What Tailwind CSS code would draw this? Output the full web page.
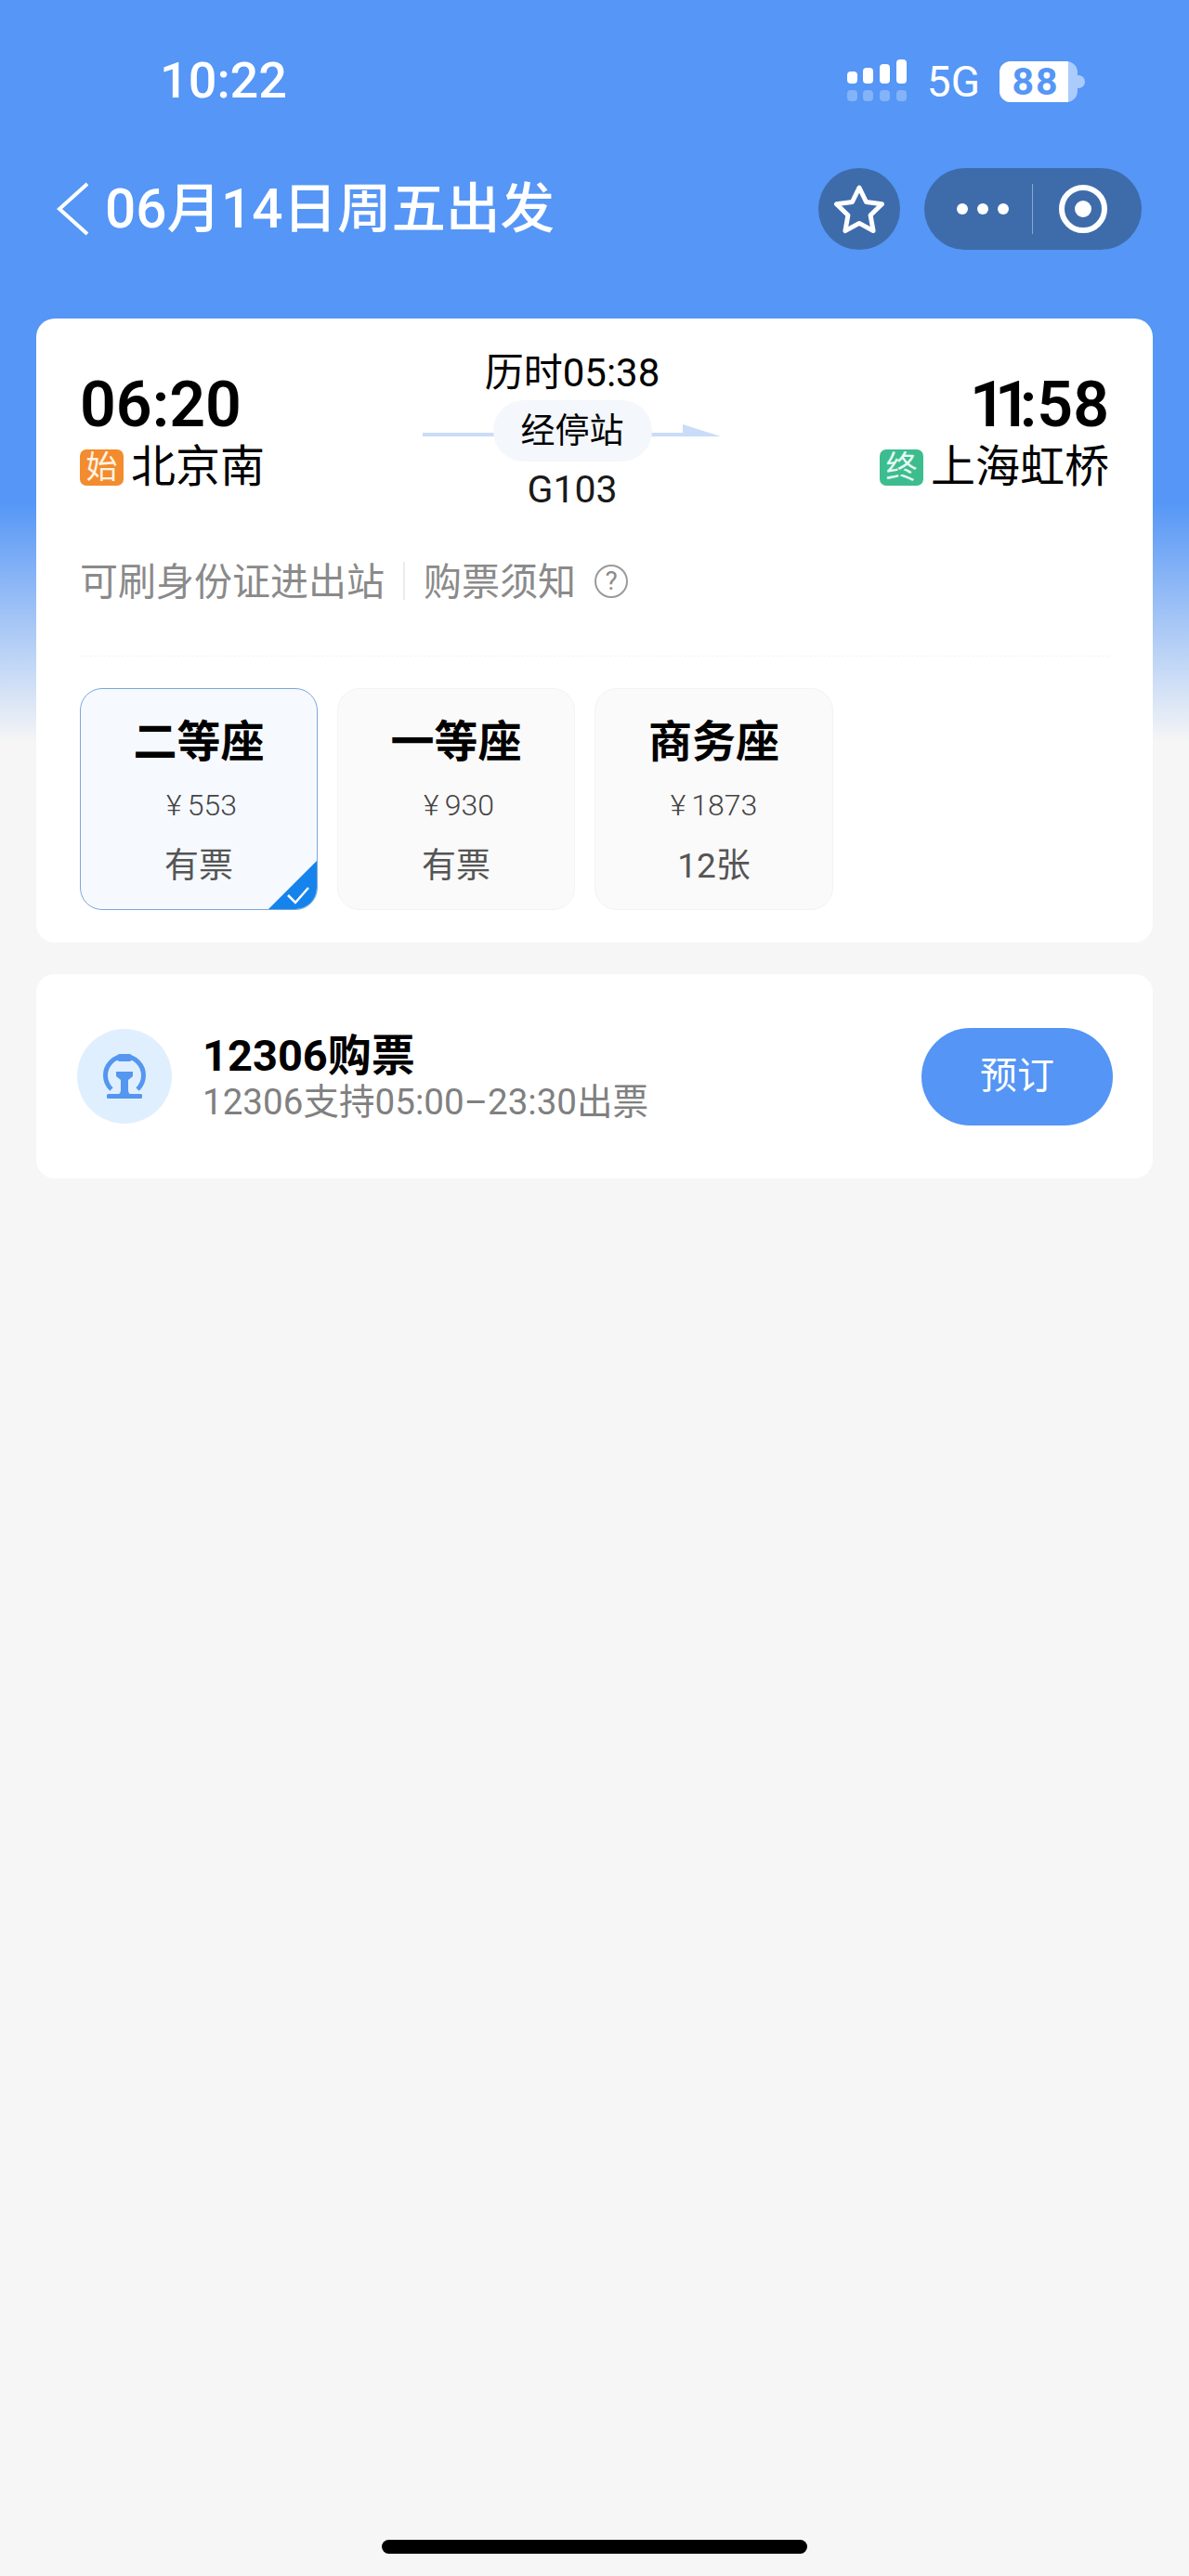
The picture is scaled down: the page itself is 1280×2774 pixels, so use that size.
<!DOCTYPE html>
<html lang="zh">
<head>
<meta charset="utf-8">
<script src="https://cdn.jsdelivr.net/npm/@tailwindcss/browser@4"></script>
</head>
<body class="m-0">
<div class="relative w-[1280px] h-[2774px] overflow-hidden flex flex-col bg-[linear-gradient(to_bottom,#5596f6_0px,#5596f6_540px,#f6f6f6_800px,#f6f6f6_100%)] font-['Roboto','Noto_Sans_CJK_SC',sans-serif] text-black">

  <!-- status bar -->
  <div class="h-[181px] shrink-0 flex flex-col">
    <div class="h-[60px] mt-[57px] pl-[172px] pr-[112px] flex justify-between items-center text-white">
      <span class="text-[54px] leading-none font-medium">10:22</span>
      <div class="flex items-center gap-[21px] pt-[2px]">
        <svg width="66" height="46" viewBox="0 0 66 46" fill="#fff" class="-mt-[2px]">
          <rect x="1" y="13" width="11" height="13" rx="4"/><rect x="18" y="9" width="11" height="17" rx="4"/><rect x="36" y="5" width="11" height="21" rx="4"/><rect x="54" y="0" width="11" height="26" rx="4"/>
          <g opacity=".28"><rect x="1" y="33" width="11" height="12" rx="4"/><rect x="18" y="33" width="11" height="12" rx="4"/><rect x="36" y="33" width="11" height="12" rx="4"/><rect x="54" y="33" width="11" height="12" rx="4"/></g>
        </svg>
        <span class="text-[46px] leading-none">5G</span>
        <div class="flex items-center">
          <div class="w-[84px] h-[44px] rounded-[12px] bg-white/50">
            <div class="w-[74px] h-full rounded-l-[12px] bg-white flex items-center justify-center text-[41px] font-bold leading-none tracking-[2px] text-[#5596f6] pl-[4px]">88</div>
          </div>
          <div class="w-[8px] h-[14px] rounded-r-full bg-white/50"></div>
        </div>
      </div>
    </div>
  </div>

  <!-- nav bar -->
  <div class="h-[88px] shrink-0 pl-[60px] pr-[51px] flex items-center justify-between text-white">
    <div class="flex items-center gap-[17px]">
      <svg width="36" height="58" viewBox="0 0 36 58" fill="none" stroke="#fff" stroke-width="4"><path d="M34 2 4 29l30 27"/></svg>
      <span class="text-[58.500px] leading-none font-medium">06月14日周五出发</span>
    </div>
    <div class="flex items-center gap-[26px]">
      <div class="w-[88px] h-[88px] rounded-full bg-[#3e6cab] flex items-center justify-center">
        <svg width="56" height="54" viewBox="0 0 56 54" fill="none" stroke="#fff" stroke-width="5" stroke-linejoin="round"><path d="M28 4l7.500 15.500 17 2.300-12.400 11.900 3 16.900L28 42.400l-15.100 8.200 3-16.900L3.500 21.800l17-2.300z"/></svg>
      </div>
      <div class="w-[234px] h-[88px] rounded-full bg-[#3e6cab] flex items-center">
        <div class="w-[116px] flex justify-center gap-[10px] pl-[10px]">
          <span class="w-[12px] h-[12px] rounded-full bg-white"></span><span class="w-[12px] h-[12px] rounded-full bg-white"></span><span class="w-[12px] h-[12px] rounded-full bg-white"></span>
        </div>
        <div class="w-px h-[54px] bg-white/40"></div>
        <div class="flex-1 flex justify-center pr-[10px]">
          <div class="w-[52px] h-[52px] rounded-full border-[6px] border-white flex items-center justify-center"><span class="w-[18px] h-[18px] rounded-full bg-white"></span></div>
        </div>
      </div>
    </div>
  </div>

  <!-- train card -->
  <div class="mt-[74px] mx-[39px] h-[672px] shrink-0 bg-white rounded-[20px] px-[47px] flex flex-col">
    <div class="h-[190px] shrink-0 pt-[59px] flex">
      <div class="w-[369px] shrink-0">
        <div class="text-[68px] leading-[68px] font-semibold">06:20</div>
        <div class="flex items-center gap-[8px] mt-[9px]">
          <span class="w-[47px] h-[39px] rounded-[7px] bg-[#f28c2f] text-[#fff3e3] text-[34px] leading-[39px] text-center">始</span>
          <span class="text-[48px] leading-[48px]">北京南</span>
        </div>
      </div>
      <div class="relative w-[322px] shrink-0 -mt-[22px] h-[180px] flex flex-col items-center">
        <div class="shrink-0 text-[42px] leading-[44px]">历时05:38</div>
        <div class="absolute left-0 top-[77px] w-full h-[24px]">
          <svg width="322" height="24" viewBox="0 0 322 24"><path d="M0 9h280V0l41 13H0z" fill="#c9dcf8"/></svg>
        </div>
        <div class="relative shrink-0 mt-[7px] h-[66px] w-[171px] rounded-full bg-[#f4f7fb] flex items-center justify-center text-[37px] leading-none">经停站</div>
        <div class="shrink-0 text-[41px] leading-[44px] mt-[8px] text-[#1a1a1a]">G103</div>
      </div>
      <div class="flex-1 flex flex-col items-end">
        <div class="text-[68px] leading-[68px] font-semibold"><span class="tracking-[-12px]">11</span>:58</div>
        <div class="flex items-center gap-[8px] mt-[9px]">
          <span class="w-[47px] h-[39px] rounded-[7px] bg-[#3dbd8f] text-[#e8fbf3] text-[34px] leading-[39px] text-center">终</span>
          <span class="text-[48px] leading-[48px]">上海虹桥</span>
        </div>
      </div>
    </div>
    <div class="h-[174px] shrink-0 pt-[72px] flex items-start text-[41px] leading-[44px] text-[#8a8a8a] border-b border-dashed border-[#f3f3f3]">
      <span>可刷身份证进出站</span>
      <span class="w-[2px] h-[41px] bg-[#ececec] mx-[20px]"></span>
      <span>购票须知</span>
      <span class="ml-[20px] mt-[3px] w-[36px] h-[36px] rounded-full border-2 border-[#9a9a9a] flex items-center justify-center text-[28px] leading-none">?</span>
    </div>
    <div class="mt-[34px] flex gap-[21px]">
      <div class="relative w-[256px] h-[239px] rounded-[24px] border border-[#7ba7d6] bg-[#f6faff] overflow-hidden flex flex-col items-center">
        <div class="text-[47px] leading-[50px] font-bold mt-[32px]">二等座</div>
        <div class="text-[32px] leading-[36px] font-light text-[#444] mt-[25px] pl-[6px]"><span class="mr-[6px]">¥</span>553</div>
        <div class="text-[37px] leading-[40px] text-[#555] mt-[28px]">有票</div>
        <div class="absolute right-0 bottom-0 w-[52px] h-[52px]">
          <svg width="52" height="52" viewBox="0 0 52 52"><path d="M52 0v52H0z" fill="#1583ec"/><path d="M21 37l8 8 14-16" fill="none" stroke="#fff" stroke-width="2.500"/></svg>
        </div>
      </div>
      <div class="w-[256px] h-[239px] rounded-[24px] border border-[#f3f3f3] bg-[#fafafa] flex flex-col items-center">
        <div class="text-[47px] leading-[50px] font-bold mt-[32px]">一等座</div>
        <div class="text-[32px] leading-[36px] font-light text-[#444] mt-[25px] pl-[6px]"><span class="mr-[6px]">¥</span>930</div>
        <div class="text-[37px] leading-[40px] text-[#555] mt-[28px]">有票</div>
      </div>
      <div class="w-[257px] h-[239px] rounded-[24px] border border-[#f3f3f3] bg-[#fafafa] flex flex-col items-center">
        <div class="text-[47px] leading-[50px] font-bold mt-[32px]">商务座</div>
        <div class="text-[32px] leading-[36px] font-light text-[#444] mt-[25px]"><span class="mr-[6px]">¥</span>1873</div>
        <div class="text-[37px] leading-[40px] text-[#555] mt-[28px]">12张</div>
      </div>
    </div>
  </div>

  <!-- booking card -->
  <div class="mt-[34px] mx-[39px] h-[220px] shrink-0 bg-white rounded-[20px] pl-[44px] pr-[43px] flex items-center justify-between">
    <div class="flex items-center gap-[33px]">
      <div class="w-[102px] h-[102px] rounded-full bg-[#e0effe] flex items-center justify-center">
        <svg width="50" height="56" viewBox="0 0 50 56" fill="#5596f0">
          <rect x="17" y="4" width="16" height="8" rx="3"/>
          <path d="M11 42A20.500 20.500 0 1 1 39 42" fill="none" stroke="#5596f0" stroke-width="5"/>
          <path d="M16 23h18v5l-5 4v11q0 4 4 5H17q4-1 4-5V32l-5-4z"/>
          <rect x="6" y="47" width="38" height="5" rx="1.500"/>
        </svg>
      </div>
      <div class="flex flex-col">
        <div class="text-[47px] leading-[52px] font-bold pt-[1px]">12306购票</div>
        <div class="text-[38.600px] leading-[42px] mt-[3px] text-[#808080]">12306支持05:00–23:30出票</div>
      </div>
    </div>
    <div class="w-[206px] h-[105px] rounded-full bg-[#5495f5] text-white text-[40px] flex items-center justify-center">预订</div>
  </div>

  <!-- home indicator -->
  <div class="mt-auto mb-[24px] mx-auto w-[458px] h-[15px] rounded-full bg-black"></div>
</div>
</body>
</html>
